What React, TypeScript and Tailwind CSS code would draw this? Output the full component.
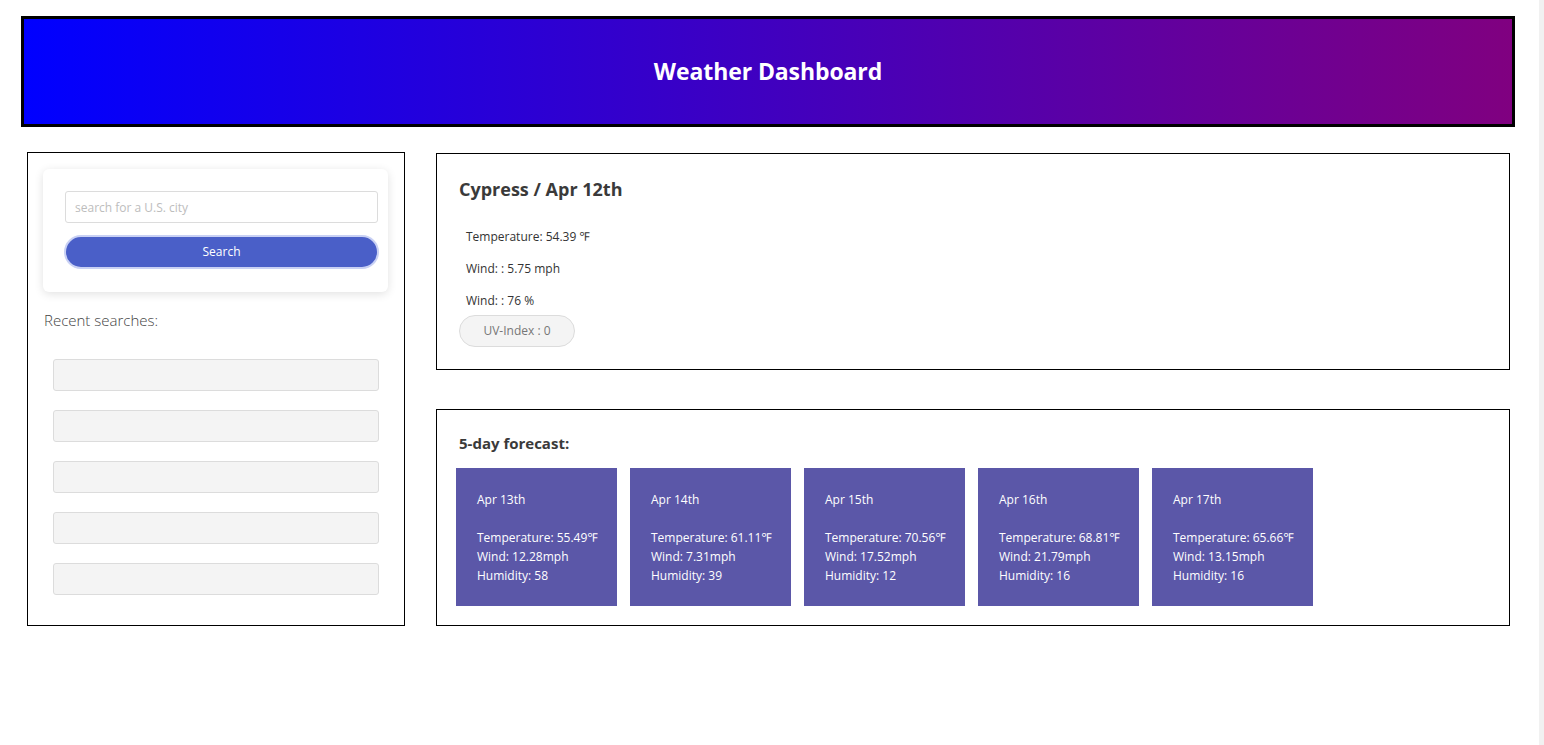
const font = { fontFamily: '"Open Sans", "Noto Sans", sans-serif' };

const recent = ["", "", "", "", ""];

const forecast = [
  { date: "Apr 13th", temp: "55.49", wind: "12.28", humidity: "58" },
  { date: "Apr 14th", temp: "61.11", wind: "7.31", humidity: "39" },
  { date: "Apr 15th", temp: "70.56", wind: "17.52", humidity: "12" },
  { date: "Apr 16th", temp: "68.81", wind: "21.79", humidity: "16" },
  { date: "Apr 17th", temp: "65.66", wind: "13.15", humidity: "16" },
];

export default function App() {
  return (
    <div className="flex min-h-screen bg-white" style={font}>
      <div className="w-[1539px]">
        <header className="ml-[21px] mt-[16px] flex h-[111px] w-[1494px] items-center justify-center border-[3px] border-black bg-[linear-gradient(to_right,#0000ff,#800080)]">
          <h1 className="text-[23px] font-bold tracking-[-0.1px] text-white">Weather Dashboard</h1>
        </header>

        <div className="ml-[27px] mt-[25px] flex items-start">
          <aside className="h-[474px] w-[378px] border border-black">
            <div className="ml-[15px] mt-[16px] h-[123px] w-[345px] rounded-md bg-white pl-[22px] pt-[22px] shadow-[0_2px_10px_rgba(0,0,0,0.12)]">
              <input
                placeholder="search for a U.S. city"
                className="h-[32px] w-[313px] rounded-[3px] border border-[#dcdcdc] px-[9px] text-[12px] text-[#333] outline-none placeholder:text-[#bdbdbd]"
              />
              <button className="-ml-[1px] mt-[12px] h-[34px] w-[315px] rounded-full border-2 border-[#c9d1f4] bg-[#4a5fc8] text-[12px] text-white">
                Search
              </button>
            </div>
            <p className="ml-[16px] mt-[17px] text-[15px] font-light text-[#444]">Recent searches:</p>
            <div className="ml-[25px] mt-[27px] flex flex-col gap-[19px]">
              {recent.map((r, i) => (
                <div key={i} className="h-[32px] w-[326px] rounded-[3px] border border-[#dcdcdc] bg-[#f4f4f4]">
                  {r}
                </div>
              ))}
            </div>
          </aside>

          <main className="ml-[31px] w-[1074px]">
            <section className="mt-[1px] h-[217px] border border-black pl-[22px] pt-[22px]">
              <h2 className="text-[18px] font-bold text-[#3a3a3a]">Cypress / Apr 12th</h2>
              <div className="ml-[7px] mt-[18px] text-[12px] leading-[32px] text-[#333]">
                <p>Temperature: 54.39 ℉</p>
                <p>Wind: : 5.75 mph</p>
                <p>Wind: : 76 %</p>
              </div>
              <div className="-mt-[2px] flex h-[32px] w-[116px] items-center justify-center rounded-full border border-[#dcdcdc] bg-[#f4f4f4] text-[12px] text-[#777]">
                UV-Index : 0
              </div>
            </section>

            <section className="mt-[39px] h-[217px] border border-black pl-[19px] pt-[22px]">
              <h3 className="ml-[3px] text-[15px] font-bold text-[#3a3a3a]">5-day forecast:</h3>
              <div className="mt-[13px] flex gap-[13px]">
                {forecast.map((d) => (
                  <div
                    key={d.date}
                    className="h-[138px] w-[161px] whitespace-nowrap bg-[#5b57a8] px-[21px] pt-[22px] text-[12px] leading-[19px] text-white"
                  >
                    <p>{d.date}</p>
                    <p>&nbsp;</p>
                    <p>Temperature: {d.temp}℉</p>
                    <p>Wind: {d.wind}mph</p>
                    <p>Humidity: {d.humidity}</p>
                  </div>
                ))}
              </div>
            </section>
          </main>
        </div>
      </div>
      <div className="w-[5px] bg-[#f1f1f1]" />
    </div>
  );
}
